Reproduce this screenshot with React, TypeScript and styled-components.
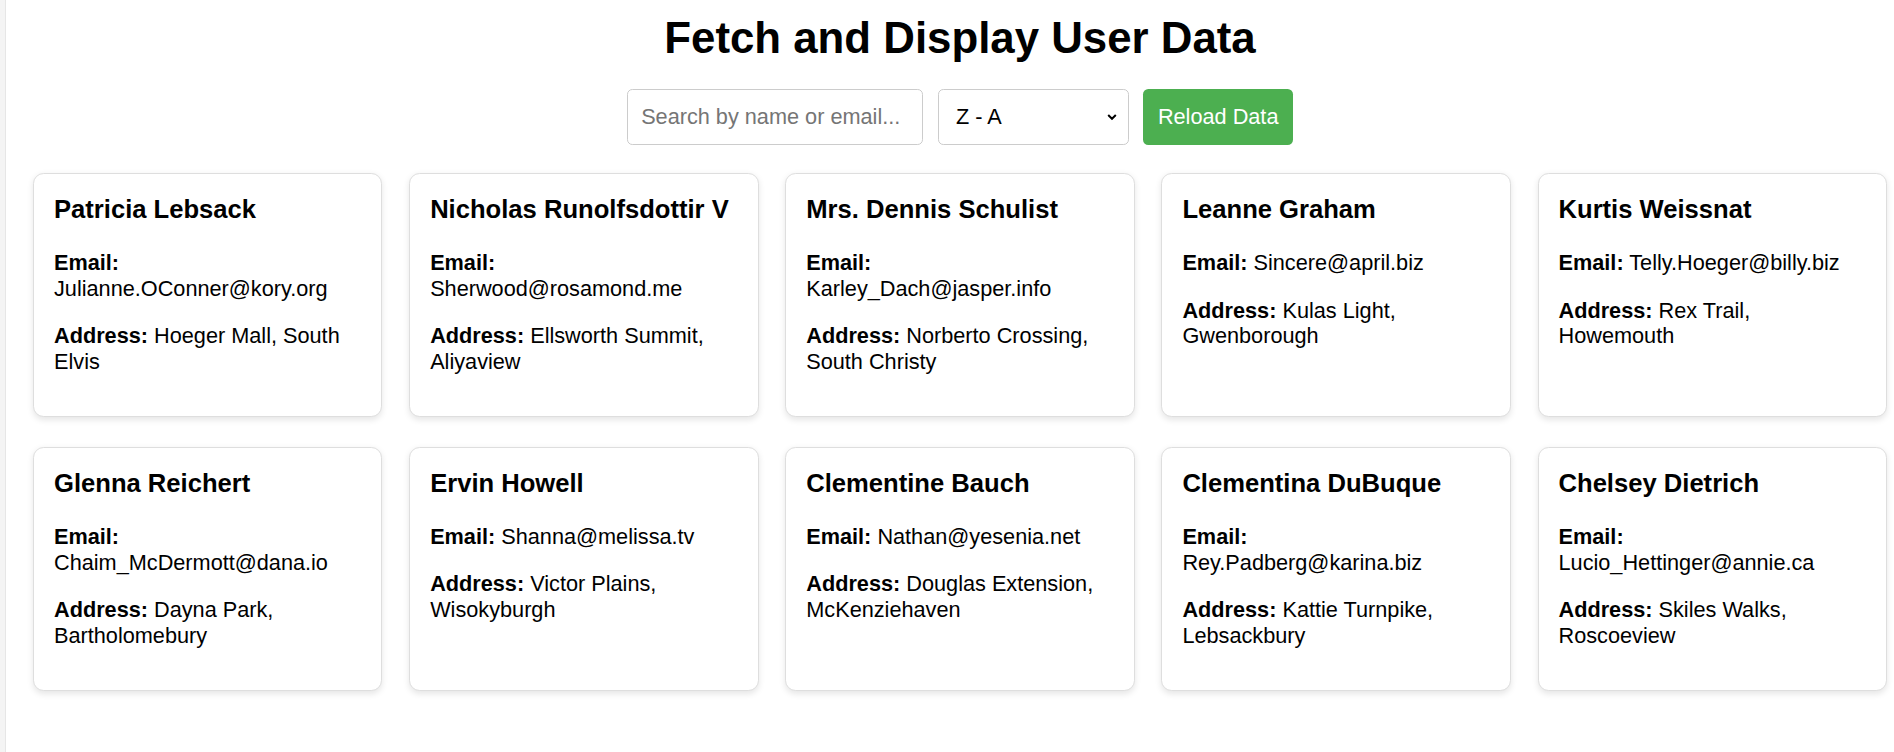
import React from "react";
import styled, { createGlobalStyle } from "styled-components";

const GlobalStyle = createGlobalStyle`
  html, body {
    margin: 0;
    padding: 0;
  }
  body {
    background: #f4f4f4;
    font-family: "Liberation Sans", Arial, sans-serif;
    color: #000;
  }
  * {
    box-sizing: border-box;
  }
`;

const Page = styled.div`
  margin-left: 5px;
  border-left: 1px solid #e6e6e6;
  background: #fff;
  min-height: 752px;
  padding: 12px 7px 40px 27px;
`;

const Title = styled.h1`
  margin: 0 0 26px;
  text-align: center;
  font-size: 43.8px;
  line-height: 51px;
  font-weight: 700;
`;

const Controls = styled.div`
  display: flex;
  justify-content: center;
  align-items: center;
  gap: 14.7px;
  margin-bottom: 28.6px;
`;

const SearchInput = styled.input`
  width: 296px;
  height: 55.5px;
  padding: 0 13.3px;
  border: 1px solid #ccc;
  border-radius: 5.33px;
  font-family: inherit;
  font-size: 21.7px;
  color: #000;
  background: #fff;
  outline: none;
  &::placeholder {
    color: #757575;
  }
`;

const SelectWrap = styled.div`
  position: relative;
  width: 191px;
  height: 55.5px;
`;

const SortSelect = styled.select`
  appearance: none;
  -webkit-appearance: none;
  width: 100%;
  height: 100%;
  padding: 0 40px 0 17.5px;
  border: 1px solid #ccc;
  border-radius: 5.33px;
  background: #fff;
  font-family: inherit;
  font-size: 21.7px;
  color: #000;
  outline: none;
`;

const Chevron = styled.svg`
  position: absolute;
  right: 12px;
  top: 50%;
  transform: translateY(-50%);
  pointer-events: none;
`;

const ReloadButton = styled.button`
  height: 55.5px;
  padding: 0 14.7px;
  border: none;
  border-radius: 5.33px;
  background: #4caf50;
  color: #fff;
  font-family: inherit;
  font-size: 21.7px;
  cursor: pointer;
`;

const Grid = styled.div`
  display: grid;
  grid-template-columns: repeat(5, 1fr);
  column-gap: 26.67px;
  row-gap: 29.3px;
`;

const Card = styled.div`
  background: #fff;
  border: 1px solid #dedede;
  border-radius: 10.67px;
  box-shadow: 0 2.67px 6.67px rgba(0, 0, 0, 0.1);
  padding: 20px;
`;

const Name = styled.h3`
  margin: 0 0 25.6px;
  font-size: 25.6px;
  line-height: 30.7px;
  font-weight: 700;
`;

const Field = styled.p`
  margin: 0 0 21.33px;
  font-size: 21.7px;
  line-height: 25.8px;
`;

const Label = styled.strong`
  font-weight: 700;
`;

type User = { name: string; email: string; street: string; city: string };

const users: User[] = [
  { name: "Patricia Lebsack", email: "Julianne.OConner@kory.org", street: "Hoeger Mall", city: "South Elvis" },
  { name: "Nicholas Runolfsdottir V", email: "Sherwood@rosamond.me", street: "Ellsworth Summit", city: "Aliyaview" },
  { name: "Mrs. Dennis Schulist", email: "Karley_Dach@jasper.info", street: "Norberto Crossing", city: "South Christy" },
  { name: "Leanne Graham", email: "Sincere@april.biz", street: "Kulas Light", city: "Gwenborough" },
  { name: "Kurtis Weissnat", email: "Telly.Hoeger@billy.biz", street: "Rex Trail", city: "Howemouth" },
  { name: "Glenna Reichert", email: "Chaim_McDermott@dana.io", street: "Dayna Park", city: "Bartholomebury" },
  { name: "Ervin Howell", email: "Shanna@melissa.tv", street: "Victor Plains", city: "Wisokyburgh" },
  { name: "Clementine Bauch", email: "Nathan@yesenia.net", street: "Douglas Extension", city: "McKenziehaven" },
  { name: "Clementina DuBuque", email: "Rey.Padberg@karina.biz", street: "Kattie Turnpike", city: "Lebsackbury" },
  { name: "Chelsey Dietrich", email: "Lucio_Hettinger@annie.ca", street: "Skiles Walks", city: "Roscoeview" },
];

export default function App() {
  return (
    <>
      <GlobalStyle />
      <Page>
        <Title>Fetch and Display User Data</Title>
        <Controls>
          <SearchInput type="text" placeholder="Search by name or email..." />
          <SelectWrap>
            <SortSelect defaultValue="desc">
              <option value="asc">A - Z</option>
              <option value="desc">Z - A</option>
            </SortSelect>
            <Chevron width="10" height="7" viewBox="0 0 10 7">
              <polyline points="1.2,1.5 5,5.3 8.8,1.5" fill="none" stroke="#000" strokeWidth="2" />
            </Chevron>
          </SelectWrap>
          <ReloadButton>Reload Data</ReloadButton>
        </Controls>
        <Grid>
          {users.map((u) => (
            <Card key={u.email}>
              <Name>{u.name}</Name>
              <Field>
                <Label>Email:</Label> {u.email}
              </Field>
              <Field>
                <Label>Address:</Label> {u.street}, {u.city}
              </Field>
            </Card>
          ))}
        </Grid>
      </Page>
    </>
  );
}
